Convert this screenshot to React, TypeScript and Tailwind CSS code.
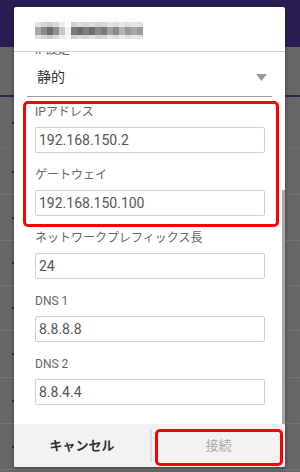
import React from "react";

const font = { fontFamily: 'Roboto, "Noto Sans CJK JP", sans-serif' };

const mosaicTop = ["#e4e4e4", "#d6d6d6", "#cfcfcf", "#dadada", "#eeeeee", "#fbfbfb", "#d2d2d2", "#dcdcdc", "#d6d6d6", "#dedede", "#d4d4d4", "#d8d8d8", "#e4e4e4", "#dddddd", "#e8e8e8", "#e0e0e0", "#e6e6e6", "#e2e2e2"];
const mosaicMid = ["#a8a8a8", "#8a8a8a", "#6e6e6e", "#909090", "#c8c8c8", "#f2f2f2", "#7a7a7a", "#6c6c6c", "#7e7e7e", "#6e6e6e", "#8a8a8a", "#7a7a7a", "#a0a0a0", "#8c8c8c", "#b4b4b4", "#989898", "#a8a8a8", "#9a9a9a"];
const mosaicBot = ["#e2e2e2", "#d8d8d8", "#cccccc", "#dadada", "#ececec", "#fafafa", "#d0d0d0", "#dadada", "#d4d4d4", "#e0e0e0", "#d4d4d4", "#d8d8d8", "#e6e6e6", "#dcdcdc", "#eaeaea", "#e0e0e0", "#e6e6e6", "#e4e4e4"];

function Field({ label, value }: { label: string; value: string }) {
  return (
    <div className="flex flex-col">
      <div className="h-[16px] text-[12px] leading-[16px] text-[#666]">{label}</div>
      <div className="mt-[7px] h-[26px] rounded-[2px] border border-[#cfcfcf] flex items-center pl-[3px] text-[14px] text-[#555]">
        {value}
      </div>
    </div>
  );
}

function BgRow({ h, first }: { h: number; first?: boolean }) {
  return (
    <div className={`relative flex items-center border-b ${first ? "border-[#6e6e6e]" : "border-[#757575]"}`} style={{ height: h }}>
      <div className="ml-[12px] w-[2px] h-[2px] rounded-full bg-[#1e1a3a]" />
    </div>
  );
}

export default function App() {
  return (
    <div className="relative w-[300px] h-[472px] overflow-hidden bg-[#676767]" style={font}>
      {/* background page */}
      <div className="flex flex-col">
        <div className="h-[47px] bg-[#2a1d52]" />
        <div className="h-[48px]" />
        <div className="h-[2px] bg-[#2a2258]" />
        <BgRow h={52} first />
        <BgRow h={46} />
        <BgRow h={46} />
        <BgRow h={45} />
        <BgRow h={45} />
        <BgRow h={47} />
        <BgRow h={46} />
        <BgRow h={46} />
      </div>

      {/* dialog */}
      <div className="absolute left-[14px] top-[7px] w-[271px] h-[460px] bg-white rounded-[2px] shadow-[0_1px_4px_rgba(0,0,0,0.4)] flex flex-col overflow-hidden">
        {/* header */}
        <div className="h-[44px] shrink-0 flex items-start pl-[21px] pt-[15px]">
          <div className="flex flex-col">
            <div className="flex">
              {mosaicTop.map((c, i) => (
                <div key={i} className="w-[6px] h-[5px]" style={{ backgroundColor: c }} />
              ))}
            </div>
            <div className="flex">
              {mosaicMid.map((c, i) => (
                <div key={i} className="w-[6px] h-[8px]" style={{ backgroundColor: c }} />
              ))}
            </div>
            <div className="flex">
              {mosaicBot.map((c, i) => (
                <div key={i} className="w-[6px] h-[4px]" style={{ backgroundColor: c }} />
              ))}
            </div>
          </div>
        </div>
        <div className="h-[1px] shrink-0 bg-[#cfcfcf]" />

        {/* scroll content */}
        <div className="relative flex-1 overflow-hidden">
          <div className="flex flex-col">
            <div className="mt-[-10px] px-[21px] h-[16px] text-[12px] leading-[16px] text-[#666]">IP設定</div>
            <div className="mx-[13px] h-[39px] border-b border-[#9e9e9e] flex items-center justify-between pl-[10px] pr-[5px]">
              <span className="text-[14px] text-[#333]">静的</span>
              <svg width="11" height="7" viewBox="0 0 11 7">
                <path d="M0 0 L11 0 L5.5 7 Z" fill="#9a9a9a" />
              </svg>
            </div>
            <div className="mt-[7px] px-[21px] pr-[20px] flex flex-col gap-[14px]">
              <Field label="IPアドレス" value="192.168.150.2" />
              <Field label="ゲートウェイ" value="192.168.150.100" />
              <Field label="ネットワークプレフィックス長" value="24" />
              <Field label="DNS 1" value="8.8.8.8" />
              <Field label="DNS 2" value="8.8.4.4" />
            </div>
          </div>
          {/* scrollbar */}
          <div className="absolute right-0 top-[138px] w-[3px] h-[234px] bg-[#a8a8a8]" />
        </div>

        {/* footer */}
        <div className="h-[43px] shrink-0 bg-[#f2f2f2] flex items-center">
          <div className="w-[136px] flex items-center justify-center text-[13px] font-bold text-[#333]">キャンセル</div>
          <div className="w-[2px] h-[33px] bg-[#dddddd]" />
          <div className="flex-1 flex items-center justify-center text-[13px] text-[#aaa]">接続</div>
        </div>

        {/* highlight overlays */}
        <div className="absolute left-[9px] top-[94px] w-[256px] h-[126px] border-[3px] border-[#ff0000] rounded-[5px]" />
        <div className="absolute left-[141px] top-[422px] w-[128px] h-[37px] border-[3px] border-[#ff0000] rounded-[5px]" />
      </div>
    </div>
  );
}
